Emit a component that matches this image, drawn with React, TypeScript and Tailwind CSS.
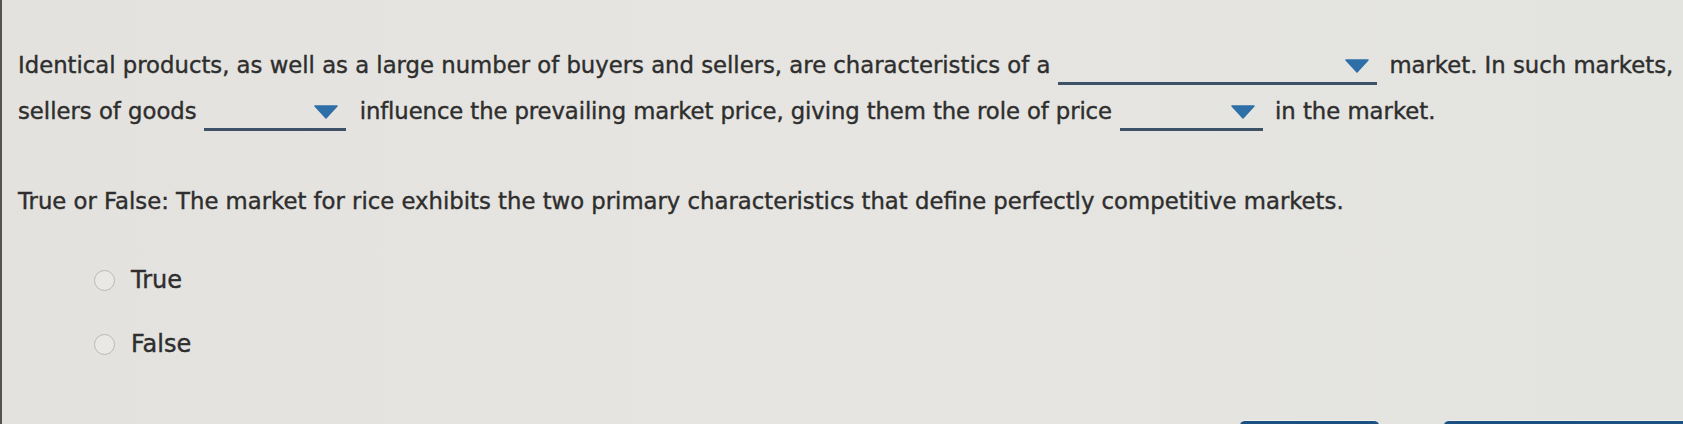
import React from "react";

function Dropdown({ width }: { width: number }) {
  return (
    <span
      className="relative inline-block h-[36px] align-[-12px] border-b-[3px] border-[#3d5267]"
      style={{ width }}
    >
      <svg
        className="absolute right-[8px] top-[10px]"
        width="24"
        height="14"
        viewBox="0 0 24 14"
      >
        <path d="M1 1 L23 1 L12 13 Z" fill="#2f6fa8" stroke="#2f6fa8" strokeWidth="1.5" strokeLinejoin="round" />
      </svg>
    </span>
  );
}

function Radio({ label }: { label: string }) {
  return (
    <div className="flex items-center h-[40px]">
      <span className="w-[21px] h-[21px] rounded-full border-[1.5px] border-[#b9b9b7] bg-[#e9e8e4]" />
      <span className="ml-[16px] text-[24px]">{label}</span>
    </div>
  );
}

export default function App() {
  return (
    <div
      className="w-[1683px] h-[424px] overflow-hidden relative bg-gradient-to-r from-[#e3e2de] via-[#e6e5e1] to-[#e3e3df] text-[#2e2e2e] [-webkit-text-stroke:0.4px_#2e2e2e]"
      style={{ fontFamily: '"DejaVu Sans", Verdana, sans-serif' }}
    >
      <div className="absolute left-0 top-0 h-full w-[2px] bg-[#55544f]" />
      <div className="pl-[18px] pt-[42px] text-[22.75px] leading-[46px]">
        <div className="whitespace-nowrap">
          Identical products, as well as a large number of buyers and sellers, are characteristics of a
          <span className="ml-[8px] mr-[12px]">
            <Dropdown width={319} />
          </span>
          market. In such markets,
        </div>
        <div className="whitespace-nowrap">
          sellers of goods
          <span className="ml-[7px] mr-[14px]">
            <Dropdown width={142} />
          </span>
          <span className="tracking-[-0.1px]">
            influence the prevailing market price, giving them the role of price
          </span>
          <span className="ml-[8px] mr-[12px]">
            <Dropdown width={143} />
          </span>
          in the market.
        </div>
        <div className="mt-[44px] whitespace-nowrap">
          True or False: The market for rice exhibits the two primary characteristics that define perfectly competitive markets.
        </div>
        <div className="mt-[36px] pl-[76px] flex flex-col gap-[24px]">
          <Radio label="True" />
          <Radio label="False" />
        </div>
      </div>
      <div className="absolute left-[1240px] top-[420px] w-[139px] h-[20px] rounded-t-[5px] bg-[#1c4f82] border-t border-[#f2f2f0]" />
      <div className="absolute left-[1444px] top-[420px] w-[260px] h-[20px] rounded-t-[5px] bg-[#1c4f82] border-t border-[#f2f2f0]" />
    </div>
  );
}
